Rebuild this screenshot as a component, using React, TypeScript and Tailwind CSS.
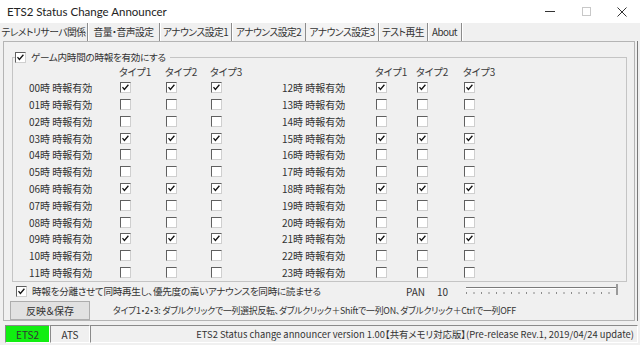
import React from "react";

const JP = "font-['Noto_Sans_CJK_JP',sans-serif] [font-feature-settings:'palt']";

const tabs = [
  { label: "テレメトリサーバ関係", w: "w-[88px]" },
  { label: "音量・音声設定", w: "w-[72px]" },
  { label: "アナウンス設定1", w: "w-[72px]" },
  { label: "アナウンス設定2", w: "w-[74px]" },
  { label: "アナウンス設定3", w: "w-[73px]", active: true },
  { label: "テスト再生", w: "w-[49px]" },
  { label: "About", w: "w-[34px]" },
];

function Check({ on }: { on: boolean }) {
  return (
    <span className="flex h-[11px] w-[11px] shrink-0 items-center justify-center border border-t-[#5f5f5f] border-l-[#5f5f5f] border-r-[#cfcfcf] border-b-[#cfcfcf] bg-white">
      {on && (
        <svg width="9" height="9" viewBox="0 0 9 9">
          <path d="M1.5 4.2 L3.4 6.4 L7.4 1.8" fill="none" stroke="#111" strokeWidth="1.3" />
        </svg>
      )}
    </span>
  );
}

function Half({ start, labelW, c1, c2, pl, w }: { start: number; labelW: string; c1: string; c2: string; pl: string; w: string }) {
  const hours = Array.from({ length: 12 }, (_, i) => start + i);
  return (
    <div className={`${w} ${pl} flex flex-col`}>
      <div className="flex h-[14px] items-center text-[10px] text-[#3a3a3a]">
        <span className={labelW} />
        <span className={`${c1} -ml-[1px]`}>タイプ1</span>
        <span className={c2}>タイプ2</span>
        <span>タイプ3</span>
      </div>
      <div className="mt-[1px] flex flex-col">
        {hours.map((h) => (
          <div key={h} className="flex h-[16.8px] items-center text-[10px] text-[#333]">
            <span className={labelW}>
              {String(h).padStart(2, "0")}時 時報有効
            </span>
            <span className={c1}>
              <Check on={h % 3 === 0} />
            </span>
            <span className={c2}>
              <Check on={h % 3 === 0} />
            </span>
            <Check on={h % 3 === 0} />
          </div>
        ))}
      </div>
    </div>
  );
}

function Slider() {
  const ticks = Array.from({ length: 21 }, (_, i) => 0.5 + i * 7.5);
  return (
    <svg width="154" height="14" viewBox="0 0 154 14" className="shrink-0">
      <line x1="0" y1="3.5" x2="151" y2="3.5" stroke="#7a7a7a" />
      <line x1="0" y1="4.5" x2="151" y2="4.5" stroke="#ffffff" />
      {ticks.map((x, i) => (
        <line key={i} x1={x} y1="8" x2={x} y2="10" stroke="#8a8a8a" />
      ))}
      <rect x="150" y="0" width="2" height="11" fill="#9a9a9a" />
    </svg>
  );
}

export default function App() {
  return (
    <div className={`flex h-[345px] w-[640px] flex-col overflow-hidden bg-[#f0f0f0] ${JP}`}>
      {/* title bar */}
      <div className="flex h-[23px] shrink-0 items-center bg-white">
        <span className="pl-[7px] font-['Lato',sans-serif] text-[11.5px] text-[#222] [font-feature-settings:normal]">
          ETS2 Status Change Announcer
        </span>
        <div className="ml-auto flex h-full">
          <span className="flex w-[36px] items-center justify-center">
            <span className="h-px w-[10px] bg-[#333]" />
          </span>
          <span className="flex w-[36px] items-center justify-center">
            <span className="h-[9px] w-[9px] border border-[#c8c8c8]" />
          </span>
          <span className="flex w-[36px] items-center justify-center">
            <svg width="10" height="10" viewBox="0 0 10 10">
              <path d="M0.5 0.5 L9.5 9.5 M9.5 0.5 L0.5 9.5" stroke="#333" strokeWidth="1" />
            </svg>
          </span>
        </div>
      </div>

      {/* tabs */}
      <div className="flex h-[18px] shrink-0 items-stretch text-[9.8px] tracking-[-0.5px] text-[#333]">
        {tabs.map((t) => (
          <div
            key={t.label}
            className={`${t.w} flex items-center justify-center border-r border-r-[#8c8c8c] shadow-[1px_0_0_#ffffff] ${t.active ? "bg-[#f4f4f4]" : ""}`}
          >
            <span className="whitespace-nowrap">{t.label}</span>
          </div>
        ))}
      </div>

      {/* tab panel */}
      <div className="ml-[3px] mr-[5px] flex h-[280px] shrink-0 flex-col border border-[#b4b4b4] shadow-[2px_0_0_#f0f0f0,3px_0_0_#7a7a7a]">
        <fieldset className="ml-[8px] mr-[7px] mt-[8px] h-[234px] border border-[#c4c4c4]">
          <legend className="ml-[2px] flex items-center gap-[5px] pr-[4px] text-[9.6px] tracking-[-0.3px] text-[#333]">
            <Check on />
            <span>ゲーム内時間の時報を有効にする</span>
          </legend>
          <div className="flex">
            <Half start={0} w="w-[269px]" pl="pl-[16px]" labelW="w-[91px]" c1="w-[46px]" c2="w-[45px]" />
            <Half start={12} w="w-[300px]" pl="pl-0" labelW="w-[94px]" c1="w-[41px]" c2="w-[47px]" />
          </div>
        </fieldset>

        <div className="flex h-[18px] shrink-0 items-center pl-[12px] text-[9.6px] text-[#333]">
          <Check on />
          <span className="ml-[5px] w-[283px] whitespace-nowrap tracking-[-0.3px]">
            時報を分離させて同時再生し、優先度の高いアナウンスを同時に読ませる
          </span>
          <span className="ml-[91px] w-[31px] text-[10px]">PAN</span>
          <span className="w-[29px] text-[10px]">10</span>
          <Slider />
        </div>

        <div className="flex items-center pl-[6px] pt-[1px]">
          <button className="flex h-[19px] w-[80px] items-center justify-center border border-[#adadad] bg-[#e1e1e1] text-[10px] text-[#333]">
            反映＆保存
          </button>
          <span className="ml-[23px] whitespace-nowrap text-[8.9px] tracking-[-0.25px] text-[#333]">
            タイプ1・2・3: ダブルクリックで一列選択反転、ダブルクリック＋Shiftで一列ON、ダブルクリック＋Ctrlで一列OFF
          </span>
        </div>
      </div>

      {/* status bar */}
      <div className="mt-[4px] flex h-[18px] shrink-0 items-stretch pl-[5px] pr-[2px] text-[10px] text-[#333]">
        <div className="flex w-[45px] items-center justify-center border border-t-[#8a8a8a] border-l-[#8a8a8a] border-r-white border-b-white bg-[#11ee11]">
          ETS2
        </div>
        <div className="flex w-[40px] items-center justify-center border border-t-[#8a8a8a] border-l-[#8a8a8a] border-r-white border-b-white">
          ATS
        </div>
        <div className="flex flex-1 items-center justify-end border border-t-[#8a8a8a] border-l-[#8a8a8a] border-r-white border-b-white pr-[3px]">
          <span className="whitespace-nowrap text-[9.4px]">
            ETS2 Status change announcer version 1.00【共有メモリ対応版】(Pre-release Rev.1, 2019/04/24 update)
          </span>
        </div>
      </div>
    </div>
  );
}
